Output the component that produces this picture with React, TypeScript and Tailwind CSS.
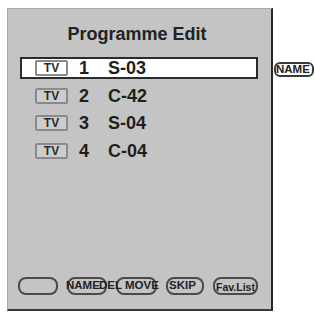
const channels = [
  { num: 1, name: "S-03" },
  { num: 2, name: "C-42" },
  { num: 3, name: "S-04" },
  { num: 4, name: "C-04" },
];

function TvBadge({ active }: { active: boolean }) {
  return (
    <div
      className={`flex h-[16px] w-[33px] items-start justify-center rounded-[2px] border-2 border-[#8a8a8a] text-[12px] font-bold leading-[12px] text-[#2a2a2a] ${
        active ? "bg-white" : "bg-[#cdcdcd]"
      }`}
    >
      TV
    </div>
  );
}

function ChannelRow({ num, name, active }: { num: number; name: string; active: boolean }) {
  return (
    <div
      className={`flex h-[22px] items-center border-2 ${
        active ? "border-[#2a2a2a] bg-white" : "border-transparent"
      }`}
    >
      <div className="ml-[13px]">
        <TvBadge active={active} />
      </div>
      <span className="ml-[11px] w-[29px] text-[18px] font-bold leading-none text-[#1e1e1e]">{num}</span>
      <span className="text-[18px] font-bold leading-none text-[#1e1e1e]">{name}</span>
    </div>
  );
}

function Pill({ width, children }: { width: string; children?: React.ReactNode }) {
  return (
    <div
      className={`flex h-[18px] shrink-0 items-start rounded-[8px] border-2 border-[#4a4a4a] ${width}`}
    >
      {children}
    </div>
  );
}

export default function App() {
  return (
    <div
      className="flex h-[315px] w-[315px] items-start bg-white pl-[7px] pt-[8px]"
      style={{ fontFamily: '"Liberation Sans", Arial, sans-serif' }}
    >
      <div className="flex h-[303px] w-[266px] flex-col border-t border-l border-r-2 border-b-2 border-t-[#a8a8a8] border-l-[#a8a8a8] border-r-[#262626] border-b-[#3a3a3a] bg-[#c4c4c4]">
        <div className="mt-[15px] pr-[5px] text-center text-[18px] font-bold leading-[20px] text-[#222]">
          Programme Edit
        </div>

        <div className="ml-[12px] mt-[13px] flex w-[238px] flex-col gap-[5.5px]">
          {channels.map((c, i) => (
            <ChannelRow key={c.num} num={c.num} name={c.name} active={i === 0} />
          ))}
        </div>

        <div className="mt-auto mb-[14px] ml-[10px] flex gap-[9px] text-[11.5px] font-bold leading-[12px] text-[#222]">
          <Pill width="w-[40px]" />
          <Pill width="w-[40px]">
            <span className="-ml-[3px] whitespace-nowrap">NAME</span>
          </Pill>
          <Pill width="w-[41px]">
            <span className="-ml-[19px] whitespace-nowrap">DEL MOVE</span>
          </Pill>
          <Pill width="w-[38px]">
            <span className="ml-[1px] whitespace-nowrap">SKIP</span>
          </Pill>
          <Pill width="w-[45px]">
            <span className="mt-[2px] whitespace-nowrap pl-[1px] text-[10.5px]">Fav.List</span>
          </Pill>
        </div>
      </div>

      <div className="ml-[1px] mt-[54px] flex h-[15px] w-[40px] items-center overflow-visible rounded-[6px] border-2 border-[#3a3a3a] text-[11.5px] font-bold leading-none text-[#222]">
        <span className="whitespace-nowrap">NAME</span>
      </div>
    </div>
  );
}
